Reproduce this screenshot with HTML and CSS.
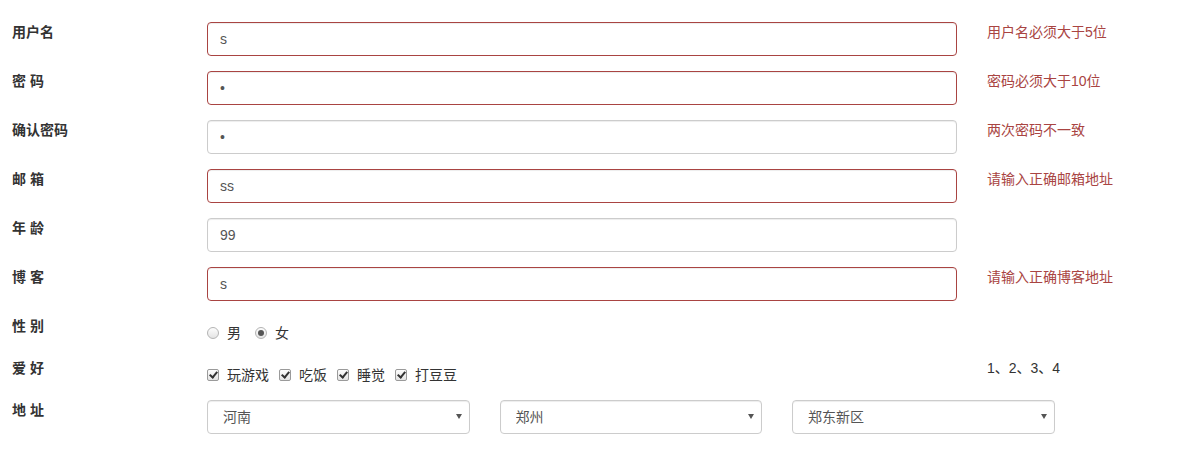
FILE: index.html
```html
<!DOCTYPE html>
<html lang="zh-CN">
<head>
<meta charset="utf-8">
<title>注册</title>
<link rel="stylesheet" href="styles.css">
</head>
<body>
<form class="form">
  <div class="group">
    <label class="label">用户名</label>
    <div class="field"><input class="control error" type="text" value="s"></div>
    <div class="msg">用户名必须大于5位</div>
  </div>
  <div class="group">
    <label class="label">密 码</label>
    <div class="field"><input class="control error" type="password" value="a"></div>
    <div class="msg">密码必须大于10位</div>
  </div>
  <div class="group">
    <label class="label">确认密码</label>
    <div class="field"><input class="control" type="password" value="a"></div>
    <div class="msg">两次密码不一致</div>
  </div>
  <div class="group">
    <label class="label">邮 箱</label>
    <div class="field"><input class="control error" type="text" value="ss"></div>
    <div class="msg">请输入正确邮箱地址</div>
  </div>
  <div class="group">
    <label class="label">年 龄</label>
    <div class="field"><input class="control" type="text" value="99"></div>
  </div>
  <div class="group">
    <label class="label">博 客</label>
    <div class="field"><input class="control error" type="text" value="s"></div>
    <div class="msg">请输入正确博客地址</div>
  </div>
  <div class="group">
    <label class="label">性 别</label>
    <div class="field options">
      <label class="opt radio-opt"><input type="radio" name="sex" class="radio">男</label>
      <label class="opt radio-opt"><input type="radio" name="sex" class="radio" checked>女</label>
    </div>
  </div>
  <div class="group">
    <label class="label">爱 好</label>
    <div class="field options">
      <label class="opt check-opt"><input type="checkbox" class="check" checked>玩游戏</label>
      <label class="opt check-opt"><input type="checkbox" class="check" checked>吃饭</label>
      <label class="opt check-opt"><input type="checkbox" class="check" checked>睡觉</label>
      <label class="opt check-opt"><input type="checkbox" class="check" checked>打豆豆</label>
    </div>
    <div class="msg plain">1、2、3、4</div>
  </div>
  <div class="group">
    <label class="label">地 址</label>
    <div class="selects">
      <div class="select-wrap"><select class="control select"><option>河南</option></select></div>
      <div class="select-wrap"><select class="control select"><option>郑州</option></select></div>
      <div class="select-wrap"><select class="control select"><option>郑东新区</option></select></div>
    </div>
  </div>
</form>
</body>
</html>
```

FILE: styles.css
```css
* { box-sizing: border-box; }

body {
  margin: 0;
  font-family: "Liberation Sans", "Noto Sans CJK SC", sans-serif;
  font-size: 14px;
  line-height: 20px;
  color: #333;
  background: #fff;
}

.form {
  padding-top: 22px;
}

.group {
  display: flex;
  align-items: flex-start;
  margin-bottom: 15px;
}

.label {
  width: 207px;
  flex: none;
  padding-left: 12px;
  font-weight: bold;
  line-height: 20px;
}

.field {
  width: 750px;
  flex: none;
}

.msg {
  margin-left: 30px;
  color: #a94442;
  line-height: 20px;
}

.msg.plain {
  color: #333;
}

.control {
  display: block;
  width: 100%;
  height: 34px;
  padding: 6px 12px;
  font-family: "Liberation Sans", "Noto Sans CJK SC", sans-serif;
  font-size: 14px;
  line-height: 20px;
  color: #555;
  background: #fff;
  border: 1px solid #ccc;
  border-radius: 4px;
  box-shadow: inset 0 1px 1px rgba(0, 0, 0, 0.075);
  outline: none;
}

.control.error {
  border-color: #a94442;
}

.options {
  display: flex;
  align-items: center;
  padding-top: 7px;
  min-height: 27px;
}

.opt {
  display: inline-flex;
  align-items: center;
  color: #333;
}

.radio-opt + .radio-opt { margin-left: 14px; }
.check-opt + .check-opt { margin-left: 10px; }

.radio,
.check {
  appearance: none;
  -webkit-appearance: none;
  margin: 0 8px 0 0;
  width: 12px;
  height: 12px;
  flex: none;
  position: relative;
  background: linear-gradient(#fdfdfd, #e4e4e4);
  border: 1px solid #b4b4b4;
}

.radio {
  border-radius: 50%;
}

.radio:checked::after {
  content: "";
  position: absolute;
  left: 2px;
  top: 2px;
  width: 6px;
  height: 6px;
  border-radius: 50%;
  background: #555;
}

.check {
  border-radius: 2px;
  border-color: #9a9a9a;
}

.check:checked::after {
  content: "";
  position: absolute;
  left: 3px;
  top: 0px;
  width: 3px;
  height: 6px;
  border: solid #333;
  border-width: 0 2px 2px 0;
  transform: rotate(40deg);
}

.selects {
  display: flex;
  gap: 30px;
}

.select-wrap {
  position: relative;
  width: 262.5px;
}

.select {
  appearance: none;
  -webkit-appearance: none;
  padding-left: 15px;
  cursor: default;
}

.select-wrap::after {
  content: "";
  position: absolute;
  right: 8px;
  top: 14px;
  width: 0;
  height: 0;
  border-left: 3px solid transparent;
  border-right: 3px solid transparent;
  border-top: 5px solid #555;
  pointer-events: none;
}
```
